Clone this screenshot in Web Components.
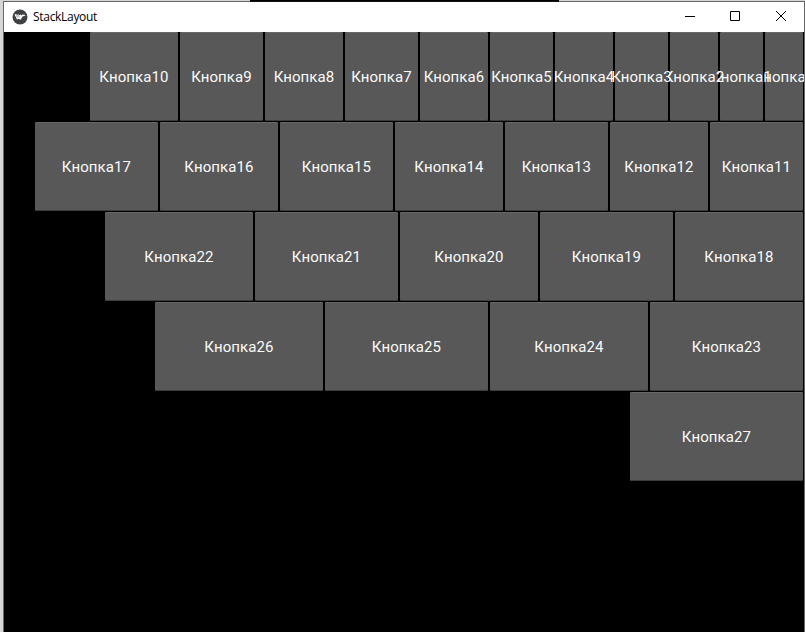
<!DOCTYPE html>
<html lang="ru">
<head>
<meta charset="utf-8">
<title>StackLayout</title>
<style>
html,body{margin:0;height:100%;overflow:hidden;background:#d6d6d6}
</style>
</head>
<body>
<app-window></app-window>
<script>
customElements.define('title-bar', class extends HTMLElement {
  constructor() {
    super();
    this.attachShadow({mode: 'open'}).innerHTML = `
<style>
:host{display:flex;align-items:center;height:30px;background:#fff;color:#000;font:12px/16px "Open Sans","Noto Sans",sans-serif;flex:none;box-sizing:border-box}
.logo{margin-left:8px;width:16px;height:16px;flex:none}
.name{margin-left:5px;flex:1;white-space:nowrap;letter-spacing:-.3px}
.controls{display:flex;height:30px}
.controls svg{width:45px;height:30px;display:block;fill:none;stroke:#000}
.controls svg:last-child{width:46px}
</style>
<svg class="logo" viewBox="0 0 16 16"><circle cx="8" cy="8" r="7.5" fill="#3e4244"/><path d="M2.5 5.4 4.3 5l.7 1.4L6.2 5l.8 1.3L8.6 5.4l.6 1 1.4-.8 3.2.3-1.6 1.2-1.7.5-1.2 2.2-1 .9-1.6-1-1.7.8z" fill="#fff"/><path d="m4.7 6.2.6 2.6M6.7 6l.5 2.4" stroke="#3e4244" stroke-width=".5"/></svg>
<span class="name"><slot></slot></span>
<div class="controls">
<svg viewBox="0 0 45 30"><path d="M17 14.5h10"/></svg>
<svg viewBox="0 0 45 30"><path d="M17.5 9.5h9v9h-9z"/></svg>
<svg viewBox="0 0 46 30"><path d="m18 9 10 10M28 9 18 19"/></svg>
</div>`;
  }
});
customElements.define('stack-button', class extends HTMLElement {
  constructor() {
    super();
    this.attachShadow({mode: 'open'}).innerHTML = `
<style>
:host{display:flex;box-sizing:border-box;height:90px;padding:1px 1px 0;flex:none}
.face{flex:1;min-width:0;display:flex;align-items:center;justify-content:center;background:#585858;border-radius:1.5px;box-shadow:inset 0 1px #686868,inset 0 -1px #3c3c3c}
.label{flex:none;white-space:nowrap;margin-top:1px;font:15px/18px Roboto,sans-serif;letter-spacing:.1px;color:#fafafa}
</style>
<div class="face"><span class="label"><slot></slot></span></div>`;
  }
});
customElements.define('stack-layout', class extends HTMLElement {
  constructor() {
    super();
    this.attachShadow({mode: 'open'}).innerHTML = `
<style>
:host{display:flex;flex-flow:row-reverse wrap;align-content:flex-start;background:#000;overflow:hidden;isolation:isolate;flex:1;min-height:0}
</style><slot></slot>`;
  }
  connectedCallback() {
    for (let i = 0; i < 28; i++) {
      const button = document.createElement('stack-button');
      button.textContent = 'Кнопка' + i;
      button.style.width = 40 + 5 * i + 'px';
      // later buttons cover the overflowing labels of earlier ones
      button.style.zIndex = i;
      this.append(button);
    }
  }
});
customElements.define('app-window', class extends HTMLElement {
  constructor() {
    super();
    this.attachShadow({mode: 'open'}).innerHTML = `
<style>
:host{display:flex;flex-direction:column;height:632px;width:805px;background:#d6d6d6}
.edge{height:1px;flex:none;margin-left:250px;width:309px;background:#000;box-shadow:0 1px #111;position:relative;z-index:2}
.frame{flex:1;min-height:0;margin-left:3px;border:1px solid #666;border-bottom:0;display:flex;flex-direction:column;box-sizing:border-box}
stack-layout{margin-top:-1px}
title-bar{position:relative;z-index:1}
</style>
<div class="edge"></div>
<div class="frame"><title-bar>StackLayout</title-bar><stack-layout></stack-layout></div>`;
  }
});
</script>
</body>
</html>
